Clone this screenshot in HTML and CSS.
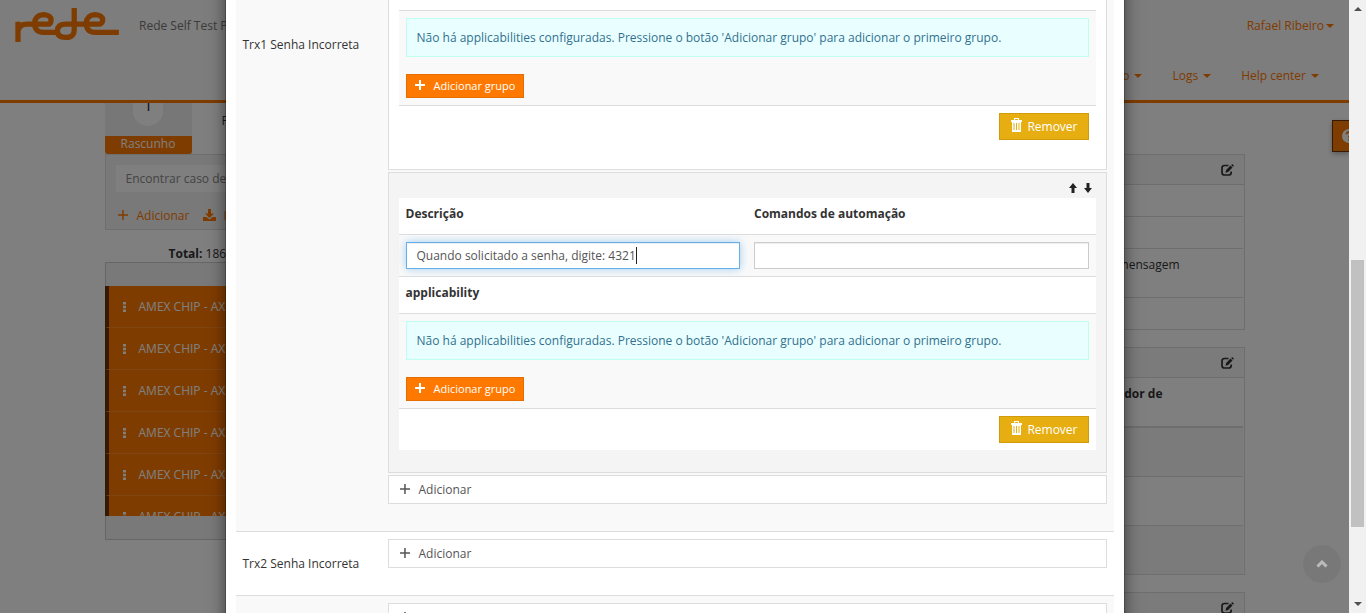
FILE: index.html
```html
<!DOCTYPE html>
<html lang="pt-BR">
<head>
<meta charset="utf-8">
<title>Rede Self Test</title>
<link rel="stylesheet" href="styles.css">
</head>
<body>
<svg class="sprite" aria-hidden="true">
  <symbol id="plus" viewBox="0 0 10 10"><path d="M4 0h2v4h4v2H6v4H4V6H0V4h4z"/></symbol>
  <symbol id="plus-thin" viewBox="0 0 10 10"><path d="M4.200 0h1.500v4.200H10v1.500H5.700V10H4.200V5.700H0V4.200h4.200z"/></symbol>
  <symbol id="trash" viewBox="0 0 11 14"><path fill-rule="evenodd" d="M3 0h5v2h3v2H0V2h3zm1 1v1h3V1zM1 4h9v10H1zm1.500 1v7h1V5zm2.500 0v7h1V5zm2.500 0v7h1V5z"/></symbol>
  <symbol id="up" viewBox="0 0 8 10"><path d="M4 0l4 5H5.500V10h-3V5H0z"/></symbol>
  <symbol id="down" viewBox="0 0 8 10"><path d="M4 10l4-5H5.500V0h-3v5H0z"/></symbol>
  <symbol id="edit" viewBox="0 0 13 12"><path fill="none" stroke="currentColor" stroke-width="1.700" d="M7.500 1.500H3.500Q1 1.500 1 4v4.500Q1 11 3.500 11h4.200Q10.200 11 10.200 8.500V7.500"/><path d="M4.500 8.700l.6-2.700L9.500 1.600l2 2L7.100 8.100zM10.200 1l1-1 1.800 1.700-1 1z"/></symbol>
  <symbol id="download" viewBox="0 0 13 12"><path d="M5 0h3v4.500h3L6.500 9 2 4.500h3zM0 8h3.500l3 2.500 3-2.500H13v4H0z"/></symbol>
  <symbol id="dots" viewBox="0 0 3 10"><path d="M0 0h3v2.500H0zM0 3.800h3v2.500H0zM0 7.500h3V10H0z"/></symbol>
</svg>

<div class="viewport">
  <div class="app">
    <header class="header">
      <div class="brand-row">
        <svg class="logo" viewBox="0 0 360 130" role="img" aria-label="rede">
          <path d="M53 127V66M53 95Q56 73 80 73H147Q153 71 153 60Q152 45 130 44Q104 46 103 71Q104 97 130 98H172M223 24V88Q224 113 198 113Q172 113 172 93Q173 73 198 73H300Q309 71 309 60Q308 45 286 44Q260 46 259 71Q260 97 286 98H358"/>
        </svg>
        <span class="brand-name">Rede Self Test P</span>
        <a class="menu-link user" href="#">Rafael Ribeiro<i class="caret"></i></a>
      </div>
      <nav class="nav">
        <a class="menu-link" href="#">o <i class="caret"></i></a>
        <a class="menu-link" href="#">Logs <i class="caret"></i></a>
        <a class="menu-link" href="#">Help center <i class="caret"></i></a>
      </nav>
    </header>

    <div class="container">
      <aside class="sidebar">
        <div class="tabs">
          <div class="tab">
            <div class="tab-icon"><span class="step">1</span></div>
            <div class="tab-title">Rascunho</div>
          </div>
          <span class="tab-next">F</span>
        </div>
        <div class="search">
          <input class="search-input" type="text" aria-label="Encontrar caso de teste" placeholder="Encontrar caso de">
          <div class="search-actions">
            <a class="action" href="#"><svg class="icon-10"><use href="#plus-thin"/></svg>Adicionar</a>
            <a class="action import" href="#" aria-label="Importar"><svg class="icon-13"><use href="#download"/></svg>I</a>
          </div>
        </div>
        <p class="total"><b>Total:</b> 186</p>
        <div class="cases">
          <ul class="case-list">
            <li class="case"><svg class="dots"><use href="#dots"/></svg>AMEX CHIP - AX</li>
            <li class="case"><svg class="dots"><use href="#dots"/></svg>AMEX CHIP - AX</li>
            <li class="case"><svg class="dots"><use href="#dots"/></svg>AMEX CHIP - AX</li>
            <li class="case"><svg class="dots"><use href="#dots"/></svg>AMEX CHIP - AX</li>
            <li class="case"><svg class="dots"><use href="#dots"/></svg>AMEX CHIP - AX</li>
            <li class="case"><svg class="dots"><use href="#dots"/></svg>AMEX CHIP - AX</li>
          </ul>
        </div>
      </aside>

      <main class="details">
        <section class="card">
          <div class="card-head"><svg class="edit"><use href="#edit"/></svg></div>
          <div class="card-row"></div>
          <div class="card-row"></div>
          <div class="card-row tall">mensagem</div>
          <div class="card-row"></div>
        </section>
        <section class="card">
          <div class="card-head"><svg class="edit"><use href="#edit"/></svg></div>
          <div class="card-row tall strong">ador de</div>
          <div class="card-row tall shaded"></div>
          <div class="card-row tall"></div>
          <div class="card-row tall shaded"></div>
        </section>
        <section class="card">
          <div class="card-head"><svg class="edit"><use href="#edit"/></svg></div>
          <div class="card-row tall"></div>
        </section>
      </main>
    </div>
    <button class="help" type="button" aria-label="Ajuda"><svg viewBox="0 0 14 14" class="help-icon"><circle cx="7" cy="7" r="7"/><path d="M4.500 5.300Q5 3 7.200 3 9.500 3.200 9.500 5.200 9.400 6.500 7.200 7.600V9M7.200 10v1.600"/></svg></button>
  </div>

  <div class="backdrop">
    <div class="dialog" role="dialog" aria-label="Trx1 Senha Incorreta">
      <div class="row row-long">
        <div class="row-label">Trx1 Senha Incorreta</div>
        <div class="row-body">
          <section class="step-box first">
            <div class="panel">
              <div class="group">
                <div class="notice">Não há applicabilities configuradas. Pressione o botão 'Adicionar grupo' para adicionar o primeiro grupo.</div>
                <button class="btn-group" type="button"><svg class="icon-10"><use href="#plus"/></svg>Adicionar grupo</button>
              </div>
              <div class="panel-foot"><button class="btn-remove" type="button"><svg class="trash"><use href="#trash"/></svg>Remover</button></div>
            </div>
          </section>
          <section class="step-box">
            <div class="sort">
              <button class="sort-btn" type="button" aria-label="Mover para cima"><svg class="arrow"><use href="#up"/></svg></button>
              <button class="sort-btn" type="button" aria-label="Mover para baixo"><svg class="arrow"><use href="#down"/></svg></button>
            </div>
            <div class="panel">
              <div class="fields heads">
                <label for="descricao">Descrição</label>
                <label for="comandos">Comandos de automação</label>
              </div>
              <div class="fields inputs">
                <div class="field"><input class="input active" id="descricao" type="text" value="Quando solicitado a senha, digite: 4321"><i class="cursor"></i></div>
                <div class="field"><input class="input" id="comandos" type="text"></div>
              </div>
              <div class="fields heads">applicability</div>
              <div class="group">
                <div class="notice">Não há applicabilities configuradas. Pressione o botão 'Adicionar grupo' para adicionar o primeiro grupo.</div>
                <button class="btn-group" type="button"><svg class="icon-10"><use href="#plus"/></svg>Adicionar grupo</button>
              </div>
              <div class="panel-foot"><button class="btn-remove" type="button"><svg class="trash"><use href="#trash"/></svg>Remover</button></div>
            </div>
          </section>
          <button class="btn-add" type="button"><svg class="icon-10"><use href="#plus-thin"/></svg>Adicionar</button>
        </div>
      </div>
      <div class="row plain">
        <div class="row-label">Trx2 Senha Incorreta</div>
        <div class="row-body"><button class="btn-add" type="button"><svg class="icon-10"><use href="#plus-thin"/></svg>Adicionar</button></div>
      </div>
      <div class="row">
        <div class="row-label"></div>
        <div class="row-body"><button class="btn-add" type="button" aria-label="Adicionar"><svg class="icon-10"><use href="#plus-thin"/></svg></button></div>
      </div>
    </div>
    <button class="to-top" type="button" aria-label="Voltar ao topo"><svg class="chevron" viewBox="0 0 12 8"><path d="M1.500 6.500L6 2l4.500 4.500"/></svg></button>
  </div>
</div>
<div class="scrollbar" aria-hidden="true">
  <i class="scroll-arrow up"></i>
  <div class="track"><div class="thumb"></div></div>
  <i class="scroll-arrow down"></i>
</div>
</body>
</html>
```

FILE: styles.css
```css
* { box-sizing: border-box; }
body {
  margin: 0;
  height: 100vh;
  display: flex;
  overflow: hidden;
  font: 12px/18px "Open Sans", "Noto Sans", sans-serif;
  color: #333;
  background: #fff;
}
button, input { font: inherit; color: inherit; border-radius: 0; }
button { cursor: pointer; }
a { text-decoration: none; color: #ff7900; }
svg { fill: currentColor; flex: none; display: block; }
.sprite { display: none; }
.icon-10 { width: 10px; height: 10px; margin-bottom: 2px; }
.icon-13 { width: 13px; height: 12px; margin-bottom: 3px; }

.viewport { flex: 1; min-width: 0; position: relative; overflow: hidden; }
.app { height: 100%; overflow: hidden; }

/* Header */
.header { background: #fafafa; border-bottom: 3px solid #ff7900; height: 103px; }
.brand-row { display: flex; align-items: center; height: 52px; padding-right: 15px; }
.logo { width: 120px; height: 43px; margin-bottom: 9px; }
.logo path { fill: none; stroke: #ff7900; stroke-width: 16; }
.brand-name { margin-left: 19px; color: #777; }
.user { margin-left: auto; }
.menu-link { display: flex; align-items: center; gap: 5px; }
.user.menu-link { gap: 2px; }
.caret { border: 4px solid transparent; border-top-color: #ff7900; border-bottom: 0; }
.nav { display: flex; justify-content: flex-end; gap: 30px; padding: 15px 30px 0 0; }

/* Page body */
.container { display: flex; justify-content: space-between; max-width: 1140px; margin: 0 auto; }
.sidebar { width: 285px; }
.tabs { display: flex; gap: 30px; }
.tab { width: 87px; background: #eee; color: #223; }
.tab-icon { height: 33px; }
.step { display: block; width: 30px; height: 23px; margin: 0 auto; border-radius: 0 0 15px 15px; background: #fff; text-align: center; font-size: 16px; line-height: 4px; overflow: hidden; }
.tab-title { height: 18px; line-height: 16px; background: #ff7900; color: #fff; text-align: center; border-radius: 0 0 3px 3px; }
.tab-next { padding-top: 9px; }
.search { border: 1px solid #ddd; background: #f2f2f2; padding: 10px; height: 76px; }
.search-input { display: block; width: 100%; height: 27px; border: 0; padding: 0 10px; background: #fff; color: #777; }
.search-input::placeholder { color: #888; opacity: 1; }
.search-actions { display: flex; gap: 14px; padding: 15px 2px 0; }
.action { display: flex; align-items: center; gap: 9px; }
.action.import { gap: 7px; }
.total { margin: 0; padding: 15px 0 0 64px; height: 32px; }
.cases { border: 1px solid #ccc; background: #f2f2f2; padding: 23px 0; }
.case-list { list-style: none; margin: 0 0 0 -1px; padding: 0; height: 230px; overflow: hidden; }
.case { display: flex; align-items: center; gap: 13px; height: 42px; padding-left: 14px; background: #ff7900; color: #fff; border-left: 4px solid #6b3300; border-bottom: 1px solid #ff8b24; }
.dots { width: 3px; height: 10px; }

.details { flex: 0 1 800px; padding-top: 51px; }
.card { border: 1px solid #ddd; margin-bottom: 17px; padding-right: 1px; }
.card-head { height: 30px; background: #f6f6f6; border-bottom: 1px solid #ddd; display: flex; justify-content: flex-end; align-items: center; padding-right: 10px; margin-right: -1px; color: #333; }
.edit { width: 13px; height: 12px; }
.card-row { height: 32px; padding: 7px 63px 0 0; text-align: right; border-bottom: 1px solid #ddd; }
.card-row.tall { height: 49px; }
.card-row:last-child { border-bottom: 0; height: 31px; }
.card-row.tall:last-child { height: 48px; }
.card-row.strong { height: 50px; font-weight: 700; padding-right: 80px; border-bottom-width: 2px; }
.card-row.shaded { background: #f6f6f6; }

.help { position: absolute; top: 120px; right: 0; width: 17px; height: 32px; padding: 0 0 0 9px; overflow: hidden; background: #ff7900; border: 1px solid #6b3300; border-right: 0; color: #fff; box-shadow: 0 2px 5px rgba(0, 0, 0, .3); }
.help-icon { width: 14px; height: 14px; }
.help-icon path { fill: none; stroke: #ff7900; stroke-width: 2; }

/* Dialog */
.backdrop { position: absolute; inset: 0; overflow: hidden; background: rgba(0, 0, 0, .5); }
.dialog { max-width: 900px; margin: -20px auto 0; padding: 20px 10px; background: #fff; border: 1px solid rgba(0, 0, 0, .2); border-width: 0 1px; background-clip: padding-box; box-shadow: 0 5px 15px rgba(0, 0, 0, .5); }
.row { display: grid; grid-template-columns: 145px 1fr; align-items: center; padding: 7px; border-bottom: 1px solid #ddd; background: #f9f9f9; }
.row.plain { background: #fff; }
.row-long { align-items: start; padding-top: 0; }
.row-long .row-label { padding-top: 36px; }
.row-body { min-width: 0; padding-bottom: 20px; }
.step-box { border: 1px solid #ddd; background: #f4f4f4; padding: 10px 10px 22px; margin-bottom: 2px; }
.step-box.first { border-top: 0; background: #fff; }
.panel { background: #fff; }
.group { padding: 7px; background: #f9f9f9; border: 1px solid #ddd; border-width: 1px 0; }
.notice { padding: 10px; line-height: 17px; border: 1px solid #bffff0; background: #e9ffff; color: #31708f; margin-bottom: 17px; }
.btn-group { display: flex; align-items: center; gap: 9px; height: 24px; padding: 0 8px; font-size: 11px; background: #ff7900; color: #fff; border: 1px solid #e66d00; }
.panel-foot { display: flex; justify-content: flex-end; padding: 7px; }
.btn-remove { display: flex; align-items: center; gap: 5px; height: 27px; padding: 0 10px 0 11px; background: #e6ae10; color: #fff; border: 1px solid #d09c0c; }
.trash { width: 11px; height: 14px; margin-bottom: 3px; }
.sort { display: flex; justify-content: flex-end; gap: 7px; height: 15px; padding-right: 4px; }
.sort-btn { padding: 0; border: 0; background: none; height: 10px; color: #222; }
.arrow { width: 8px; height: 10px; }
.fields { display: grid; grid-template-columns: 1fr 1fr; gap: 14px; padding: 7px; }
.heads { height: 36px; font-weight: 700; }
.inputs { background: #f9f9f9; border: 1px solid #ddd; border-width: 1px 0; }
.field { position: relative; }
.input { display: block; width: 100%; height: 27px; padding: 0 10px; border: 1px solid #ccc; background: #fff; color: #555; outline: 0; box-shadow: inset 0 1px 1px rgba(0, 0, 0, .075); }
.input.active { border-color: #66afe9; box-shadow: inset 0 1px 1px rgba(0, 0, 0, .075), 0 0 8px rgba(102, 175, 233, .6); }
.cursor { position: absolute; left: 230px; top: 5px; width: 1px; height: 17px; background: #222; }
.btn-add { display: flex; align-items: center; gap: 9px; width: 100%; height: 29px; padding: 0 11px; border: 1px solid #ddd; background: #fff; color: #555; }

.to-top { position: absolute; right: 8px; bottom: 30px; width: 38px; height: 38px; padding: 0; display: flex; align-items: center; justify-content: center; border: 0; border-radius: 50%; background: rgba(0, 0, 0, .05); }
.chevron { width: 12px; height: 8px; }
.chevron path { fill: none; stroke: #bbb; stroke-width: 3; }

/* Scrollbar */
.scrollbar { flex: 0 0 17px; display: flex; flex-direction: column; align-items: center; background: #f1f1f1; padding: 7px 0; }
.track { flex: 1; width: 13px; margin: 6px 0; display: flex; flex-direction: column; }
.track::before { content: ""; flex: 0 0 42%; }
.thumb { flex: 0 0 46%; background: #c1c1c1; }
.scroll-arrow { border: 4px solid transparent; }
.scroll-arrow.up { border-top: 0; border-bottom-color: #505050; }
.scroll-arrow.down { border-bottom: 0; border-top-color: #505050; }
```
